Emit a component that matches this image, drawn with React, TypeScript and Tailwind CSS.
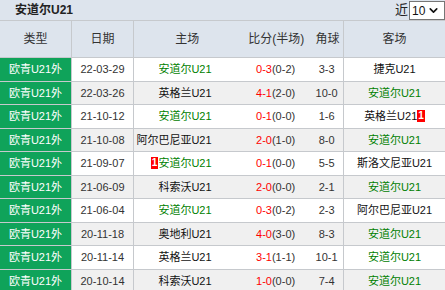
import { ChevronDown } from "lucide-react";

type Row = {
  date: string;
  home: string;
  homeWin?: boolean;
  homeBadge?: string;
  score: string;
  half: string;
  corner: string;
  away: string;
  awayWin?: boolean;
  awayBadge?: string;
};

const rows: Row[] = [
  { date: "22-03-29", home: "安道尔U21", homeWin: true, score: "0-3", half: "(0-2)", corner: "3-3", away: "捷克U21" },
  { date: "22-03-26", home: "英格兰U21", score: "4-1", half: "(2-0)", corner: "10-0", away: "安道尔U21", awayWin: true },
  { date: "21-10-12", home: "安道尔U21", homeWin: true, score: "0-1", half: "(0-0)", corner: "1-6", away: "英格兰U21", awayBadge: "1" },
  { date: "21-10-08", home: "阿尔巴尼亚U21", score: "2-0", half: "(1-0)", corner: "8-0", away: "安道尔U21", awayWin: true },
  { date: "21-09-07", home: "安道尔U21", homeWin: true, homeBadge: "1", score: "0-1", half: "(0-0)", corner: "5-5", away: "斯洛文尼亚U21" },
  { date: "21-06-09", home: "科索沃U21", score: "2-0", half: "(0-0)", corner: "2-1", away: "安道尔U21", awayWin: true },
  { date: "21-06-04", home: "安道尔U21", homeWin: true, score: "0-3", half: "(0-2)", corner: "2-3", away: "阿尔巴尼亚U21" },
  { date: "20-11-18", home: "奥地利U21", score: "4-0", half: "(3-0)", corner: "8-3", away: "安道尔U21", awayWin: true },
  { date: "20-11-14", home: "英格兰U21", score: "3-1", half: "(1-1)", corner: "10-1", away: "安道尔U21", awayWin: true },
  { date: "20-10-14", home: "科索沃U21", score: "1-0", half: "(0-0)", corner: "7-4", away: "安道尔U21", awayWin: true },
];

function Badge({ n }: { n: string }) {
  return (
    <span className="inline-block bg-[#f00] text-white text-[10px] font-bold leading-[12px] px-[1px] min-w-[7px] text-center">
      {n}
    </span>
  );
}

export default function App() {
  return (
    <div
      className="w-[445px] h-[290px] overflow-hidden bg-white text-[#333]"
      style={{ fontFamily: '"Liberation Sans", "Noto Sans CJK SC", sans-serif' }}
    >
      {/* title bar */}
      <div className="h-[21px] bg-[#dde4ed] border-b border-[#c6c9cd] flex items-center justify-between pl-[15px]">
        <span className="text-[12px] font-bold text-[#222]">安道尔U21</span>
        <div className="flex items-center gap-[1px] h-full">
          <span className="text-[13px] text-[#222]">近</span>
          <div className="w-[36px] h-[19px] mt-[1px] bg-white border border-[#767676] flex items-center pl-[2px] gap-[2px] text-[12px] text-[#111]">
            10
            <ChevronDown size={13} strokeWidth={3} />
          </div>
        </div>
      </div>

      {/* header */}
      <div className="flex h-[37px] bg-[#dde4ed] border-b border-[#c6c9cd] text-[12px] text-[#333]">
        <div className="w-[72px] border-r border-[#c6c9cd] flex items-center justify-center">类型</div>
        <div className="w-[62px] border-r border-[#c6c9cd] flex items-center justify-center">日期</div>
        <div className="w-[210px] border-r border-[#c6c9cd] flex">
          <div className="w-[107px] flex items-center justify-center">主场</div>
          <div className="w-[72px] flex items-center justify-center">比分(半场)</div>
          <div className="w-[31px] flex items-center justify-center">角球</div>
        </div>
        <div className="flex-1 flex items-center justify-center">客场</div>
      </div>

      {/* rows */}
      {rows.map((r, i) => (
        <div
          key={i}
          className={`flex h-[23.5px] border-b border-[#c6c9cd] text-[11px] ${i % 2 === 1 ? "bg-[#f0f0f0]" : "bg-white"}`}
        >
          <div className="w-[72px] border-r border-[#c6c9cd] bg-[#0fa35a] text-white flex items-center justify-center">
            欧青U21外
          </div>
          <div className="w-[62px] border-r border-[#c6c9cd] flex items-center justify-center text-[#333]">
            {r.date}
          </div>
          <div className="w-[210px] border-r border-[#c6c9cd] flex">
            <div className={`w-[82px] flex items-center justify-end pr-[4px] ${r.homeWin ? "text-[#008000]" : "text-[#111]"}`}>
              {r.homeBadge && <Badge n={r.homeBadge} />}
              {r.home}
            </div>
            <div className="w-[95px] flex items-center justify-end pr-[15px]">
              <span className="text-[#f00]">{r.score}</span>
              <span className="text-[#333]">{r.half}</span>
            </div>
            <div className="w-[33px] flex items-center justify-center text-[#333]">{r.corner}</div>
          </div>
          <div className={`flex-1 flex items-center justify-center ${r.awayWin ? "text-[#008000]" : "text-[#111]"}`}>
            {r.away}
            {r.awayBadge && <Badge n={r.awayBadge} />}
          </div>
        </div>
      ))}
    </div>
  );
}
